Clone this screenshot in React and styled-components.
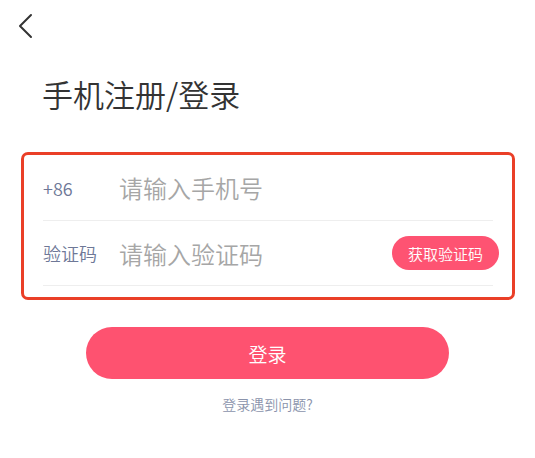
import React from "react";
import styled, { createGlobalStyle } from "styled-components";

const Global = createGlobalStyle`
  html, body { margin: 0; padding: 0; background: #fff; }
  body { font-family: "Noto Sans CJK SC", "Noto Sans", sans-serif; }
  * { box-sizing: border-box; }
`;

const Page = styled.div`
  width: 535px;
  min-height: 458px;
  display: flex;
  flex-direction: column;
  background: #fff;
`;

const Header = styled.div`
  display: flex;
  align-items: center;
  padding: 13px 0 0 18px;
  height: 39px;
`;

const BackButton = styled.button`
  border: 0;
  padding: 0;
  background: none;
  display: flex;
  cursor: pointer;
`;

const Title = styled.h1`
  margin: 35px 0 0 42px;
  font-size: 31px;
  line-height: 40px;
  font-weight: 350;
  color: #333;
`;

const FormBox = styled.div`
  margin: 38px 20px 0 21px;
  border: 3px solid #ea3f27;
  border-radius: 7px;
  padding: 0 19px 11px 19px;
  display: flex;
  flex-direction: column;
`;

const Row = styled.div`
  display: flex;
  align-items: center;
  height: ${(p) => p.$h}px;
  border-bottom: 1px solid #eeeeee;
`;

const Label = styled.span`
  width: 76px;
  flex-shrink: 0;
  font-size: 18px;
  font-weight: 350;
  color: #6e7897;
`;

const Placeholder = styled.span`
  flex: 1;
  font-size: 24px;
  font-weight: 350;
  color: #a6a6a6;
`;

const CodeButton = styled.button`
  width: 107px;
  height: 34px;
  margin-right: -6px;
  border: 0;
  border-radius: 17px;
  background: #fe5372;
  color: #fff;
  font-family: inherit;
  font-size: 15px;
  font-weight: 350;
  padding: 0;
`;

const LoginButton = styled.button`
  align-self: center;
  margin-top: 27px;
  width: 363px;
  height: 52px;
  border: 0;
  border-radius: 26px;
  background: #fe5270;
  color: #fff;
  font-family: inherit;
  font-size: 19px;
  font-weight: 350;
  padding: 0;
`;

const HelpLink = styled.div`
  align-self: center;
  margin-top: 16px;
  font-size: 14px;
  line-height: 18px;
  font-weight: 350;
  color: #8a93ab;
`;

export default function App() {
  return (
    <Page>
      <Global />
      <Header>
        <BackButton aria-label="back">
          <svg width="16" height="26" viewBox="0 0 16 26" fill="none">
            <polyline
              points="13,2 2,13 13,24"
              stroke="#333"
              strokeWidth="2"
              strokeLinecap="round"
              strokeLinejoin="round"
            />
          </svg>
        </BackButton>
      </Header>
      <Title>手机注册/登录</Title>
      <FormBox>
        <Row $h={66}>
          <Label>+86</Label>
          <Placeholder>请输入手机号</Placeholder>
        </Row>
        <Row $h={65}>
          <Label>验证码</Label>
          <Placeholder>请输入验证码</Placeholder>
          <CodeButton>获取验证码</CodeButton>
        </Row>
      </FormBox>
      <LoginButton>登录</LoginButton>
      <HelpLink>登录遇到问题?</HelpLink>
    </Page>
  );
}
